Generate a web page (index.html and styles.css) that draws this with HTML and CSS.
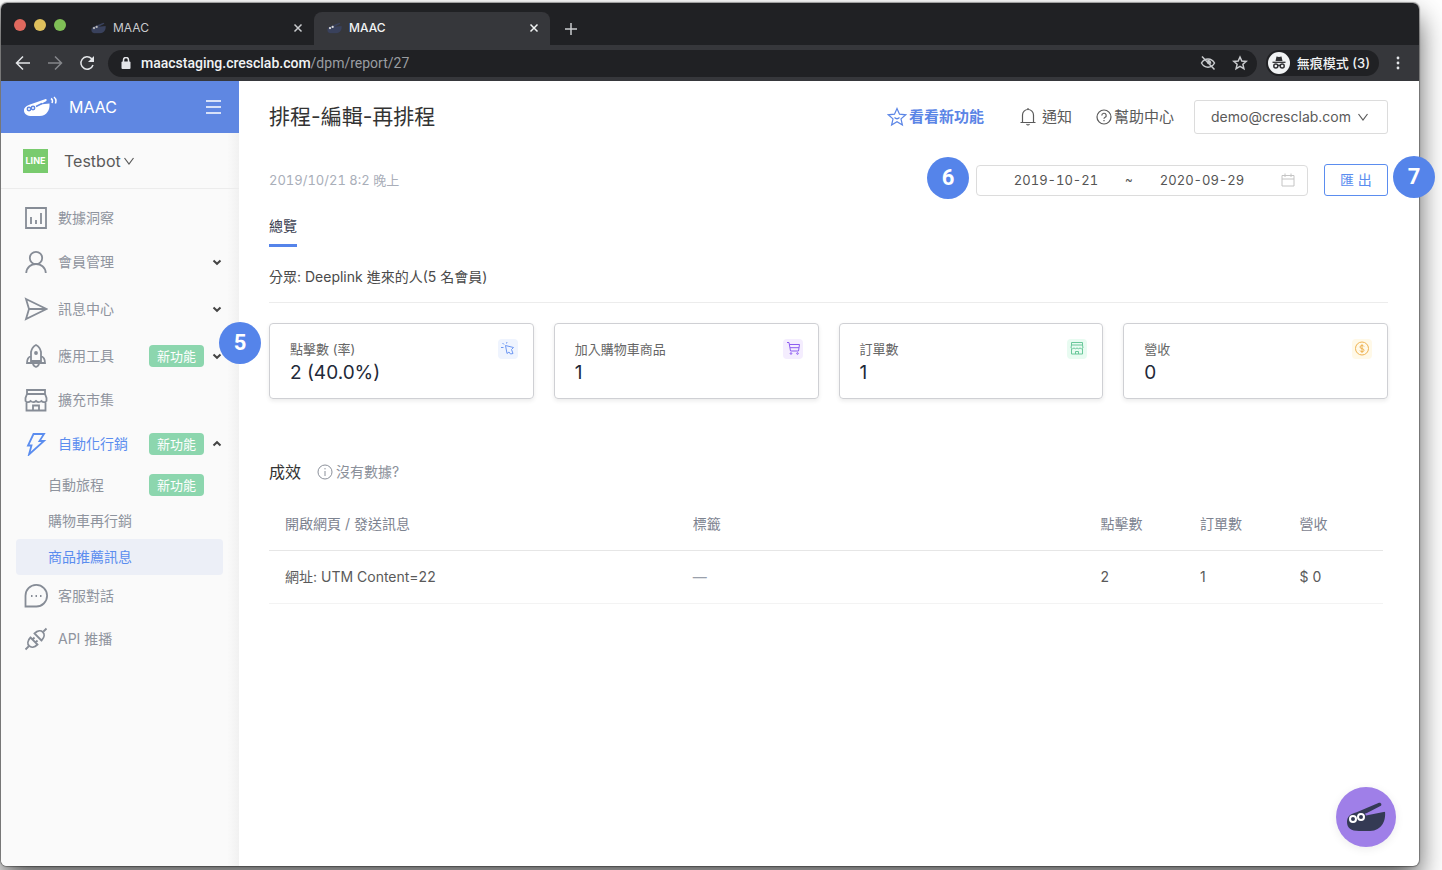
FILE: index.html
```html
<!DOCTYPE html>
<html lang="zh-Hant">
<head>
<meta charset="utf-8">
<meta name="viewport" content="width=device-width, initial-scale=1">
<title>MAAC</title>
<link rel="stylesheet" href="styles.css">
</head>
<body>
<svg class="defs" aria-hidden="true">
  <symbol id="bowl" viewBox="0 0 40 30">
    <path d="M1 20C1 14 5 12 10 10.500L33 .8c2-.7 3.400 2.200 1.400 3.200L20 11.500l19-2c1 9-3 19-15 19.500H13C5 29 1 26 1 20z"/>
  </symbol>
  <symbol id="chev" viewBox="0 0 12 12"><path d="M1.500 3L6 9l4.500-6"/></symbol>
  <symbol id="caret" viewBox="0 0 10 10"><path d="M1.500 3.500L5 6.800l3.500-3.300"/></symbol>
  <symbol id="cross" viewBox="0 0 10 10"><path d="M1.500 1.500l7 7M8.500 1.500l-7 7"/></symbol>
  <symbol id="shop" viewBox="0 0 24 24"><path d="M3 2h18v4H3zM3 6L1.500 10v3c1.500 1.600 3.500 1.600 5.200 0 1.500 1.600 3.700 1.600 5.300 0 1.600 1.600 3.800 1.600 5.300 0 1.700 1.600 3.700 1.600 5.200 0v-3L21 6M2.500 14v8.500h19V14M9 22v-4.500h6V22"/></symbol>
</svg>
<div class="window">
  <div class="tabstrip">
    <div class="lights"><i class="light light-close"></i><i class="light light-min"></i><i class="light light-max"></i></div>
    <div class="tab">
      <svg class="favicon" viewBox="0 0 40 30"><use href="#bowl"/><circle cx="8" cy="15" r="3" fill="#bbb"/><circle cx="15" cy="12" r="3" fill="#bbb"/></svg>
      <span class="tab-name">MAAC</span>
      <button class="icon-btn" aria-label="關閉分頁"><svg class="x"><use href="#cross"/></svg></button>
    </div>
    <div class="tab active">
      <svg class="favicon" viewBox="0 0 40 30"><use href="#bowl"/><circle cx="8" cy="15" r="3" fill="#ddd"/><circle cx="15" cy="12" r="3" fill="#ddd"/></svg>
      <span class="tab-name">MAAC</span>
      <button class="icon-btn" aria-label="關閉分頁"><svg class="x"><use href="#cross"/></svg></button>
    </div>
    <button class="icon-btn new-tab" aria-label="新分頁"><svg class="plus" viewBox="0 0 12 12"><path d="M6 0v12M0 6h12"/></svg></button>
  </div>
  <div class="toolbar">
    <div class="nav">
      <button class="icon-btn" aria-label="上一頁"><svg class="i16" viewBox="0 0 16 16"><path d="M15 8H2M8 1.500L1.500 8 8 14.500"/></svg></button>
      <button class="icon-btn dim" aria-label="下一頁"><svg class="i16" viewBox="0 0 16 16"><path d="M1 8h13M8 1.500L14.500 8 8 14.500"/></svg></button>
      <button class="icon-btn" aria-label="重新載入"><svg class="i16" viewBox="0 0 16 16"><path d="M14 10A6.200 6.200 0 1 1 12.500 3.600L14 5.200"/><path d="M15 1v6H9z" fill="currentColor" stroke="none"/></svg></button>
    </div>
    <div class="omnibox">
      <svg class="lock" viewBox="0 0 10 12"><rect x="0.500" y="4.500" width="9" height="7.500" rx="1" fill="currentColor" stroke="none"/><path d="M2.500 5V3a2.500 2.500 0 0 1 5 0v2"/></svg>
      <div class="url"><b>maacstaging.cresclab.com</b>/dpm/report/27</div>
      <button class="icon-btn" aria-label="追蹤保護"><svg class="i16" viewBox="0 0 16 16"><path d="M1.500 8c3-5.500 10-5.500 13 0-3 5.500-10 5.500-13 0z"/><path d="M8 5.500A2.500 2.500 0 0 1 10.500 8L8 8z" fill="currentColor"/><path d="M2 1.500l12.500 13"/></svg></button>
      <button class="icon-btn" aria-label="加入書籤"><svg class="i16" viewBox="0 0 16 16"><path d="M8 2l1.800 4 4.400.4-3.300 2.900 1 4.300L8 11.300l-3.900 2.300 1-4.300-3.300-2.900 4.400-.4z"/></svg></button>
    </div>
    <button class="incognito">
      <svg class="spy" viewBox="0 0 22 22"><circle cx="11" cy="11" r="11" fill="#f1f3f4"/><path d="M7.500 9l1-4.500 2.500.6 2.500-.6 1 4.500z" fill="#303134"/><path d="M4.500 10.300h13" stroke="#303134" stroke-width="1.300"/><g fill="none" stroke="#303134"><circle cx="7.800" cy="14" r="2"/><circle cx="14.200" cy="14" r="2"/><path d="M9.800 13.600q1.200-.8 2.400 0"/></g></svg>
      無痕模式 (3)
    </button>
    <button class="icon-btn" aria-label="選單"><svg class="kebab" viewBox="0 0 4 14"><circle cx="2" cy="2" r="1.400"/><circle cx="2" cy="7" r="1.400"/><circle cx="2" cy="12" r="1.400"/></svg></button>
  </div>

  <div class="app">
    <aside class="sidebar">
      <div class="brand">
        <svg class="logo" viewBox="0 0 34 24">
          <path d="M1 15.500c0-3.500 3-4.800 6-6L22 4.200c1.800-.5 2.400 1.300 1 2L17 9.500l9.500-1C27 15 24 20.800 16.500 21H9C4 21 1 19 1 15.500z" fill="#fff"/>
          <g fill="#fff" stroke="#5f87e2"><circle cx="6" cy="14" r="1.700"/><circle cx="10" cy="13" r="1.700"/></g>
          <path d="M13 11.500L19 8.500" stroke="#5f87e2"/>
          <path d="M28 3.500q2.300 1.500 1 4.500M31 2q3 2.500 1.400 6.500" fill="none" stroke="#fff"/>
        </svg>
        <span class="brand-name">MAAC</span>
        <button class="icon-btn" aria-label="收合選單"><svg class="burger" viewBox="0 0 16 14"><path d="M0 1h15M0 7h15M0 13h15"/></svg></button>
      </div>
      <button class="bot"><span class="line-logo">LINE</span>Testbot<svg class="chev"><use href="#chev"/></svg></button>
      <nav>
        <ul class="menu">
          <li><a href="#"><svg class="mi" viewBox="0 0 24 24"><path d="M2 2h20v20H2zM7 18v-7M12 18v-4M17 18V7"/></svg><span>數據洞察</span></a></li>
          <li class="exp"><a href="#"><svg class="mi" viewBox="0 0 24 24"><circle cx="12" cy="8" r="6.200"/><path d="M2.200 23C3 11 21 11 21.800 23"/></svg><span>會員管理</span><svg class="caret"><use href="#caret"/></svg></a></li>
          <li class="exp"><a href="#"><svg class="mi" viewBox="0 0 24 24"><path d="M2 2l20.500 10L2 22l3-10zM5 12h17"/></svg><span>訊息中心</span><svg class="caret"><use href="#caret"/></svg></a></li>
          <li class="exp"><a href="#"><svg class="mi" viewBox="0 0 24 24"><path d="M7 17V8q1-5 5-7 4 2 5 7v9zM7 12q-4 1.500-4 7h18q0-5.500-4-7M9 19q0 3 3 4 3-1 3-4"/><circle cx="12" cy="9" r="1"/></svg><span>應用工具</span><em>新功能</em><svg class="caret"><use href="#caret"/></svg></a></li>
          <li><a href="#"><svg class="mi"><use href="#shop"/></svg><span>擴充市集</span></a></li>
          <li class="exp on"><a href="#"><svg class="mi" viewBox="0 0 24 24"><path d="M9.500 2H20l-4.500 7h4.500L5 22.500l2.500-9H4z"/></svg><span>自動化行銷</span><em>新功能</em><svg class="caret up"><use href="#caret"/></svg></a>
            <ul class="submenu">
              <li><a href="#"><span>自動旅程</span><em>新功能</em></a></li>
              <li><a href="#"><span>購物車再行銷</span></a></li>
              <li><a href="#" class="current"><span>商品推薦訊息</span></a></li>
            </ul>
          </li>
          <li><a href="#"><svg class="mi" viewBox="0 0 24 24"><path d="M1.500 22.500V12A10.800 10.800 0 1 1 12 22.500z"/><path d="M7 12h1.500M11.500 12H13M16 12h1.500" stroke-width="2"/></svg><span>客服對話</span></a></li>
          <li class="last"><a href="#"><svg class="mi" viewBox="0 0 24 24"><path d="M1.500 22.500l3-3M22.500 1.500l-3 3M6.500 10.500l7 7C7 24 0 17 6.500 10.500zM17.500 13.500l-7-7C17 0 24 7 17.500 13.500zM8.500 12.500l2-2M11.500 15.500l2-2"/></svg><span>API 推播</span></a></li>
        </ul>
      </nav>
    </aside>

    <main class="content">
      <header class="top">
        <h1>排程-編輯-再排程</h1>
        <a href="#" class="news"><svg class="i20" viewBox="0 0 20 20"><path d="M10 1.500l2.500 5.700 6.200.6-4.700 4.100 1.400 6.100L10 14.800 4.600 18 6 11.900 1.300 7.800l6.200-.6z"/><path d="M7.500 10.500q2.500 2.500 5 0"/></svg>看看新功能</a>
        <a href="#" class="bell"><svg class="i20" viewBox="0 0 20 20"><path d="M4.500 15.500V8a5.500 5.500 0 0 1 11 0v7.500M2.500 15.500h15M8.500 17q1.500 2 3 0M10 1v1.500"/></svg>通知</a>
        <a href="#" class="help"><svg class="i16" viewBox="0 0 16 16"><circle cx="8" cy="8" r="7"/><path d="M5.800 6.500a2.200 2.200 0 1 1 3 2Q8 8.800 8 9.800M8 11v1.200"/></svg>幫助中心</a>
        <button class="account">demo@cresclab.com<svg class="chev"><use href="#chev"/></svg></button>
      </header>

      <div class="filters">
        <time>2019/10/21 8:2 晚上</time>
        <div class="range">
          <span class="marker left">6</span>
          <input type="text" aria-label="開始日期" value="2019-10-21">
          <span class="tilde">~</span>
          <input type="text" aria-label="結束日期" value="2020-09-29">
          <svg class="cal" viewBox="0 0 14 14"><path d="M1 2.500h12v10.500H1zM1 6h12M4 .5v3.500M10 .5v3.500"/></svg>
        </div>
        <div class="export">
          <button>匯 出</button>
          <span class="marker right">7</span>
        </div>
      </div>

      <div class="tabs"><a href="#" class="tab-link">總覽</a></div>
      <p class="segment">分眾: Deeplink 進來的人(5 名會員)</p>

      <section class="cards">
        <span class="marker first">5</span>
        <article class="card">
          <div><h2>點擊數 (率)</h2><strong>2 (40.0%)</strong></div>
          <svg class="badge blue" viewBox="0 0 20 20"><path d="M7.500 6.500l8 2-2 2 1.500 4-2.500.5-1.500-2-2 1.500zM3 8.500h2.500M4.500 4l1.500 1.500M9 3l-.5 1.500"/></svg>
        </article>
        <article class="card">
          <div><h2>加入購物車商品</h2><strong>1</strong></div>
          <svg class="badge purple" viewBox="0 0 20 20"><path d="M4 3.500h2l1.500 8.500h8l1-6.500h-10M7 8.700h9"/><circle cx="8" cy="14.500" r=".8"/><circle cx="14.500" cy="14.500" r=".8"/></svg>
        </article>
        <article class="card">
          <div><h2>訂單數</h2><strong>1</strong></div>
          <svg class="badge green" viewBox="0 0 20 20"><path d="M4.500 3.500h11v2.500h-11zM4.500 6L4 9q1.500 1.500 3 0 1.500 1.500 3 0 1.500 1.500 3 0 1.500 1.500 3 0l-.5-3M4.500 10v5h11v-5M8.500 15v-2.500h3V15"/></svg>
        </article>
        <article class="card">
          <div><h2>營收</h2><strong>0</strong></div>
          <svg class="badge gold" viewBox="0 0 20 20"><circle cx="10" cy="9.500" r="6.500"/><path d="M12 7.500Q11.500 6.500 10 6.500 8 6.500 8 8t2 1.600q2 .3 2 1.700t-2 1.400q-1.600 0-2-1.200M10 5.200v8.800"/></svg>
        </article>
      </section>

      <div class="section-head">
        <h3>成效</h3>
        <a href="#" class="no-data"><svg class="i16" viewBox="0 0 16 16"><circle cx="8" cy="8" r="7"/><path d="M8 7v5M8 4v1.400"/></svg>沒有數據?</a>
      </div>

      <table>
        <thead><tr><th class="wide">開啟網頁 / 發送訊息</th><th class="wide">標籤</th><th>點擊數</th><th>訂單數</th><th>營收</th></tr></thead>
        <tbody><tr><td>網址: UTM Content=22</td><td class="none">—</td><td>2</td><td>1</td><td>$ 0</td></tr></tbody>
      </table>
    </main>
  </div>
  <button class="chat" aria-label="客服">
    <svg viewBox="0 0 40 30"><use href="#bowl"/><g fill="#343a54" stroke="#fff" stroke-width="2"><circle cx="7" cy="17" r="3"/><circle cx="15" cy="15" r="3"/></g><path d="M19 11.500L40 7.500v2L20 13.500z" fill="#9f7fe8"/></svg>
  </button>
</div>
</body>
</html>
```
FILE: styles.css
```css
* { box-sizing: border-box; }
body {
  margin: 0;
  min-height: 100vh;
  display: flex;
  padding: 3px 23px 4px 1px;
  background: #fff;
  overflow: hidden;
  font: 14px/20px Inter, "Noto Sans CJK TC", sans-serif;
  color: #5a5a5a;
}
h1, h2, h3, p, ul { margin: 0; padding: 0; font-weight: 400; }
ul { list-style: none; }
a { color: inherit; text-decoration: none; }
button { font: inherit; color: inherit; background: none; border: 0; padding: 0; cursor: pointer; }
svg { flex: none; fill: none; stroke: currentColor; stroke-width: 1.5; }
.defs { position: absolute; width: 0; height: 0; }

.window {
  position: relative;
  flex: 1;
  display: flex;
  flex-direction: column;
  border-radius: 6px;
  background: #fff;
  box-shadow: 0 0 1px 1px rgba(0, 0, 0, .35), 0 14px 28px rgba(0, 0, 0, .65);
}

/* browser chrome */
.icon-btn { display: flex; align-items: center; justify-content: center; }
.i16 { width: 16px; height: 16px; }
.i20 { width: 20px; height: 20px; }
.tabstrip {
  display: flex;
  align-items: flex-end;
  height: 42px;
  padding-left: 13px;
  background: #202124;
  border-radius: 6px 6px 0 0;
  color: #c9cbce;
  font-size: 12px;
}
.lights { display: flex; align-items: center; gap: 8px; width: 64px; height: 40px; }
.light { width: 12px; height: 12px; border-radius: 50%; }
.light-close { background: #e0695e; }
.light-min { background: #dfc05c; }
.light-max { background: #7fbf56; }
.tab {
  display: flex;
  align-items: center;
  gap: 7px;
  width: 236px;
  height: 33px;
  padding: 0 11px 2px 13px;
  border-radius: 8px 8px 0 0;
}
.tab.active { background: #36373b; color: #f1f3f4; font-weight: 500; }
.tab-name { flex: 1; }
.favicon { width: 15px; height: 12px; fill: #39415c; stroke: none; }
.x { width: 10px; height: 10px; }
.plus { width: 12px; height: 12px; }
.new-tab { height: 33px; width: 42px; }
.toolbar {
  display: flex;
  align-items: center;
  gap: 9px;
  height: 36px;
  padding-right: 11px;
  background: #36373b;
  color: #e4e6e9;
}
.nav { display: flex; gap: 16px; padding: 0 4px 0 14px; }
.dim { color: #85878b; }
.omnibox {
  flex: 1;
  display: flex;
  align-items: center;
  gap: 16px;
  height: 27px;
  padding: 0 9px 0 13px;
  border-radius: 14px;
  background: #202124;
  color: #c9cbce;
}
.lock { width: 10px; height: 12px; margin-right: -6px; color: #e4e6e9; }
.url { flex: 1; font-family: Roboto, sans-serif; color: #9a9da1; }
.url b { font-weight: 500; color: #f1f3f4; }
.incognito {
  display: flex;
  align-items: center;
  gap: 7px;
  height: 26px;
  padding: 0 9px 0 2px;
  border-radius: 13px;
  background: #202124;
  color: #f1f3f4;
  font-size: 13px;
  font-weight: 500;
}
.spy { width: 22px; height: 22px; stroke: none; }
.kebab { width: 20px; height: 14px; fill: currentColor; stroke: none; }

/* sidebar */
.app { flex: 1; display: flex; }
.sidebar { width: 238px; background: linear-gradient(90deg, #fafafa 95%, #f1f1f1); border-radius: 0 0 0 6px; }
.brand {
  display: flex;
  align-items: center;
  gap: 12px;
  height: 52px;
  padding: 0 17px 0 22px;
  background: #5f87e2;
  color: #fff;
  font-size: 16px;
}
.brand-name { flex: 1; }
.logo { width: 34px; height: 24px; stroke: none; }
.burger { width: 16px; height: 14px; }
.bot {
  display: flex;
  align-items: center;
  width: 100%;
  height: 56px;
  padding: 0 22px;
  border-bottom: 1px solid #ececec;
  font-size: 16px;
}
.line-logo {
  width: 25px;
  margin-right: 16px;
  background: #79cb6e;
  color: #fff;
  font-size: 9px;
  font-weight: 700;
  line-height: 24px;
}
.chev { width: 12px; height: 12px; margin-left: 6px; stroke-width: 1.2; }
.bot .chev { margin-left: 2px; }
.menu { padding: 8px 16px 8px 15px; color: #8f949e; }
.menu a { display: flex; align-items: center; height: 41px; padding-left: 8px; }
.menu .exp > a { height: 47px; }
.menu .last { margin-top: 2px; }
.menu span { flex: 1; }
.mi { width: 24px; height: 24px; margin-right: 10px; stroke: #868c96; stroke-width: 1.8; }
.menu em {
  width: 55px;
  margin-right: 19px;
  border-radius: 4px;
  background: #8cd6ae;
  color: #fff;
  font-style: normal;
  font-size: 13px;
  line-height: 22px;
  text-align: center;
}
.exp > a em { margin-right: 8px; }
.caret { width: 10px; height: 10px; margin-right: 1px; stroke: #444; stroke-width: 2; }
.up { transform: scaleY(-1); }
.on > a, .menu .current { color: #5b8def; }
.on > a .mi { stroke: #5b8def; }
.submenu .current { background: #eceff7; border-radius: 4px; }
.menu .submenu a { height: 36px; padding-left: 32px; }

/* report */
.content { flex: 1; min-width: 0; padding: 0 31px 40px 30px; }
.top { display: flex; align-items: center; height: 72px; }
.top h1 { flex: 1; font-size: 21px; line-height: 28px; color: #333; }
.top a { display: flex; align-items: center; }
.top svg { stroke-width: 1.2; }
.news { gap: 2px; margin-right: 34px; font-size: 15px; font-weight: 700; color: #5b85e6; }
.bell { gap: 4px; margin-right: 24px; font-size: 15px; }
.help { gap: 2px; margin-right: 20px; font-size: 15px; }
.account {
  display: flex;
  align-items: center;
  height: 34px;
  padding: 0 18px 0 16px;
  border: 1px solid #dcdcdc;
  border-radius: 3px;
}
.filters { display: flex; align-items: center; gap: 16px; height: 54px; font-variant-numeric: tabular-nums; }
.filters time { flex: 1; font-size: 13px; color: #a9aeb9; }
.range {
  position: relative;
  display: flex;
  align-items: center;
  height: 31px;
  padding: 0 12px;
  border: 1px solid #dcdcdc;
  border-radius: 4px;
}
.range input {
  width: 134px;
  border: 0;
  padding: 0;
  background: none;
  font: inherit;
  font-size: 13px;
  font-variant-numeric: inherit;
  color: #555;
  text-align: center;
}
.tilde { width: 12px; font-size: 12px; text-align: center; }
.cal { width: 14px; height: 14px; margin-left: 12px; stroke: #c4c4c4; stroke-width: 1; }
.export { position: relative; }
.export button {
  display: block;
  width: 64px;
  height: 32px;
  border: 1px solid #5b8def;
  border-radius: 3px;
  color: #5b8def;
}
.marker {
  position: absolute;
  z-index: 1;
  width: 42px;
  border-radius: 50%;
  background: #5584ea;
  color: #fff;
  font: 700 22px/42px Roboto, sans-serif;
  text-align: center;
}
.marker.left { right: calc(100% + 8px); top: -9px; }
.marker.right { left: calc(100% + 5px); top: -8px; }
.marker.first { right: calc(100% + 8px); top: 19px; }
.tabs { display: flex; padding-top: 9px; }
.tab-link { padding-bottom: 8px; border-bottom: 3px solid #5584ea; color: #3b4152; }
.segment { padding: 20px 0 15px; border-bottom: 1px solid #ececec; color: #4a4a4a; }
.cards { position: relative; display: grid; grid-template-columns: repeat(4, 1fr); gap: 20px; padding-top: 20px; }
.card {
  display: flex;
  justify-content: space-between;
  min-height: 76px;
  padding: 15px 15px 11px 20px;
  border: 1px solid #cfd0d4;
  border-radius: 4px;
  box-shadow: 0 2px 4px rgba(0, 0, 0, .08);
}
.card h2 { font-size: 13px; line-height: 20px; color: #666; }
.card strong { display: block; font-size: 19px; line-height: 28px; font-weight: 400; color: #222938; }
.badge { width: 20px; height: 20px; border-radius: 4px; stroke-width: 1; }
.blue { background: #eff4fe; color: #6d97f2; }
.purple { background: #f4edfe; color: #8c5cf0; }
.green { background: #e8fbf1; color: #69c79a; }
.gold { background: #fff9e8; color: #eeb354; }
.section-head { display: flex; align-items: center; gap: 16px; padding: 61px 0 14px; }
.section-head h3 { font-size: 16px; line-height: 24px; color: #333; }
.no-data { display: flex; align-items: center; gap: 3px; color: #8b909a; }
.no-data svg { stroke-width: 1; }
table { width: calc(100% - 5px); table-layout: fixed; border-collapse: collapse; }
th, td { height: 53px; padding: 0 16px; border-bottom: 1px solid #e6e6e6; text-align: left; font-weight: 400; }
th { height: 52px; color: #7d8390; white-space: nowrap; }
td { border-bottom-color: #f3f3f3; }
.wide { width: 36.600%; }
.none { color: #9aa0ab; }

.chat {
  position: absolute;
  right: 23px;
  bottom: 19px;
  width: 60px;
  height: 60px;
  border-radius: 50%;
  background: #9f7fe8;
  box-shadow: 0 2px 10px rgba(0, 0, 0, .08);
}
.chat svg { width: 40px; height: 30px; margin-top: 5px; fill: #343a54; stroke: none; }
```
